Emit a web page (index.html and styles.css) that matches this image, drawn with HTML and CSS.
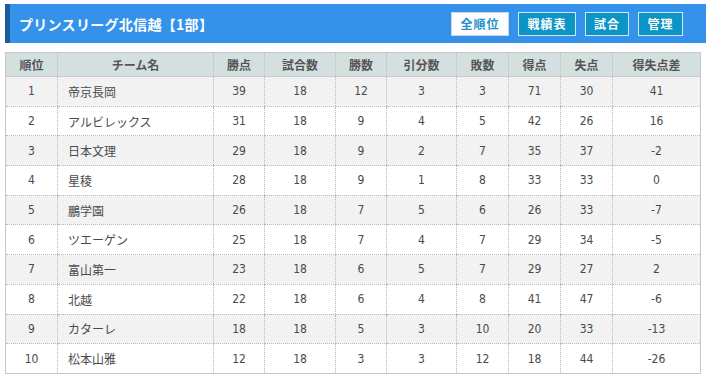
FILE: index.html
```html
<!DOCTYPE html>
<html lang="ja">
<head>
<meta charset="utf-8">
<link rel="stylesheet" href="styles.css">
</head>
<body>
<div class="page">
  <div class="bar">
    <h1 class="title">プリンスリーグ北信越【1部】</h1>
    <div class="btns">
      <a class="btn btn-on w58">全順位</a>
      <a class="btn w58">戦績表</a>
      <a class="btn w44">試合</a>
      <a class="btn w45">管理</a>
    </div>
  </div>
  <table class="standings">
    <colgroup>
      <col class="c52"><col class="c156"><col class="c51"><col class="c71"><col class="c51"><col class="c70"><col class="c52"><col class="c52"><col class="c52"><col class="c88">
    </colgroup>
    <thead>
      <tr><th>順位</th><th>チーム名</th><th>勝点</th><th>試合数</th><th>勝数</th><th>引分数</th><th>敗数</th><th>得点</th><th>失点</th><th>得失点差</th></tr>
    </thead>
    <tbody>
      <tr><td>1</td><td class="name">帝京長岡</td><td>39</td><td>18</td><td>12</td><td>3</td><td>3</td><td>71</td><td>30</td><td>41</td></tr>
      <tr><td>2</td><td class="name">アルビレックス</td><td>31</td><td>18</td><td>9</td><td>4</td><td>5</td><td>42</td><td>26</td><td>16</td></tr>
      <tr><td>3</td><td class="name">日本文理</td><td>29</td><td>18</td><td>9</td><td>2</td><td>7</td><td>35</td><td>37</td><td>-2</td></tr>
      <tr><td>4</td><td class="name">星稜</td><td>28</td><td>18</td><td>9</td><td>1</td><td>8</td><td>33</td><td>33</td><td>0</td></tr>
      <tr><td>5</td><td class="name">鵬学園</td><td>26</td><td>18</td><td>7</td><td>5</td><td>6</td><td>26</td><td>33</td><td>-7</td></tr>
      <tr><td>6</td><td class="name">ツエーゲン</td><td>25</td><td>18</td><td>7</td><td>4</td><td>7</td><td>29</td><td>34</td><td>-5</td></tr>
      <tr><td>7</td><td class="name">富山第一</td><td>23</td><td>18</td><td>6</td><td>5</td><td>7</td><td>29</td><td>27</td><td>2</td></tr>
      <tr><td>8</td><td class="name">北越</td><td>22</td><td>18</td><td>6</td><td>4</td><td>8</td><td>41</td><td>47</td><td>-6</td></tr>
      <tr><td>9</td><td class="name">カターレ</td><td>18</td><td>18</td><td>5</td><td>3</td><td>10</td><td>20</td><td>33</td><td>-13</td></tr>
      <tr><td>10</td><td class="name">松本山雅</td><td>12</td><td>18</td><td>3</td><td>3</td><td>12</td><td>18</td><td>44</td><td>-26</td></tr>
    </tbody>
  </table>
</div>
</body>
</html>
```
FILE: styles.css
```css
html, body {
  margin: 0;
  padding: 0;
  background: #fff;
}
.page {
  padding: 4px 0 0 5px;
  font-family: "Noto Sans CJK JP", sans-serif;
}
.bar {
  display: flex;
  align-items: center;
  justify-content: space-between;
  height: 39px;
  background: #3592eb;
  border-left: 5px solid #1b5c9c;
  padding: 0 23px 0 9px;
}
.title {
  margin: 0;
  color: #fff;
  font-size: 14px;
  font-weight: bold;
  line-height: 1;
  letter-spacing: 0.3px;
}
.btns {
  display: flex;
  gap: 9px;
}
.btn {
  box-sizing: border-box;
  height: 24px;
  display: flex;
  align-items: center;
  justify-content: center;
  background: #0b94c6;
  border: 1px solid #d5e6f0;
  color: #fff;
  font-size: 12px;
  font-weight: bold;
  letter-spacing: 1px;
}
.btn-on {
  background: #fff;
  border-color: #c9d6df;
  color: #1d8fcf;
}
.w58 { width: 58px; }
.w44 { width: 44px; }
.w45 { width: 45px; }
.standings {
  margin-top: 9px;
  width: 696px;
  table-layout: fixed;
  border-collapse: collapse;
  border: 1px solid #c8c8c8;
  color: #4a4a4a;
}
.c52 { width: 52px; }
.c156 { width: 156px; }
.c51 { width: 51px; }
.c71 { width: 71px; }
.c70 { width: 70px; }
.c88 { width: 88px; }
.standings th {
  background: #d4e0e0;
  color: #555;
  font-size: 12px;
  font-weight: bold;
  height: 23px;
  padding: 0;
  border-left: 1px dotted #bbb;
  border-bottom: 1px solid #c8c8c8;
}
.standings td {
  height: 28.7px;
  padding: 0;
  text-align: center;
  font-family: "DejaVu Sans Condensed", "DejaVu Sans", "Noto Sans CJK JP", sans-serif;
  font-size: 12px;
  border-left: 1px dotted #bbb;
  border-bottom: 1px dotted #bbb;
}
.standings td.name {
  text-align: left;
  padding-left: 10px;
  font-family: "Noto Sans CJK JP", sans-serif;
}
.standings th:first-child,
.standings td:first-child {
  border-left: 1px solid #c8c8c8;
}
.standings tbody tr:nth-child(odd) {
  background: #f2f2f2;
}
```
